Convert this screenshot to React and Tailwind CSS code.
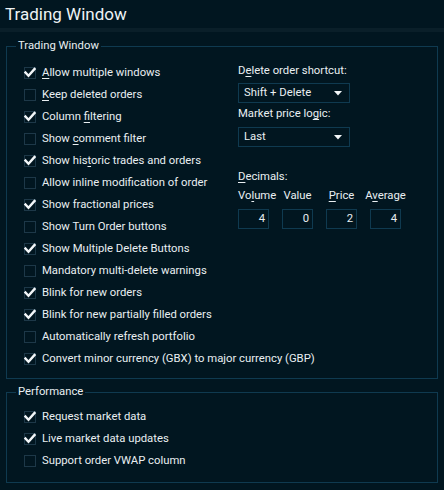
import React from 'react';

const options = [
  { label: 'Allow multiple windows', key: 'A', checked: true },
  { label: 'Keep deleted orders', key: 'K', checked: false },
  { label: 'Column filtering', key: 'f', checked: true },
  { label: 'Show comment filter', key: 'c', checked: false },
  { label: 'Show historic trades and orders', key: 't', checked: true },
  { label: 'Allow inline modification of order', checked: false },
  { label: 'Show fractional prices', checked: true },
  { label: 'Show Turn Order buttons', checked: false },
  { label: 'Show Multiple Delete Buttons', checked: true },
  { label: 'Mandatory multi-delete warnings', checked: false },
  { label: 'Blink for new orders', checked: true },
  { label: 'Blink for new partially filled orders', checked: true },
  { label: 'Automatically refresh portfolio', checked: false },
  { label: 'Convert minor currency (GBX) to major currency (GBP)', checked: true },
];

const perf = [
  { label: 'Request market data', checked: true },
  { label: 'Live market data updates', checked: true },
  { label: 'Support order VWAP column', checked: false },
];

// underline the first occurrence of the mnemonic letter
const Mnemonic = ({ text, k }) => {
  if (!k) return text;
  const i = text.indexOf(k);
  if (i < 0) return text;
  return (
    <>
      {text.slice(0, i)}
      <span className="underline underline-offset-2">{text[i]}</span>
      {text.slice(i + 1)}
    </>
  );
};

const Check = ({ label, k, checked }) => (
  <div className="flex items-center gap-1.5 h-[22px] whitespace-nowrap">
    <span className="w-3 h-3 border border-[#1d3848] flex items-center justify-center shrink-0">
      {checked && (
        <svg width="12" height="12" viewBox="0 0 12 12" className="overflow-visible">
          <polyline points="1.5,5.5 4.5,8.8 10.5,2" fill="none" stroke="#f2f6f8" strokeWidth="2.4" strokeLinecap="square" />
        </svg>
      )}
    </span>
    <span><Mnemonic text={label} k={k} /></span>
  </div>
);

const Select = ({ value }) => (
  <div className="w-[112px] h-5 border border-[#0f3a50] flex items-center justify-between pl-[5px] pr-[7px]">
    <span>{value}</span>
    <svg width="8" height="5" viewBox="0 0 8 5">
      <polygon points="0,0 8,0 4,4.5" fill="#f2f6f8" />
    </svg>
  </div>
);

const App = () => {
  const decimals = [
    { label: 'Volume', k: 'l', value: '4', align: 'justify-self-start' },
    { label: 'Value', value: '0', align: 'justify-self-center' },
    { label: 'Price', k: 'P', value: '2', align: 'justify-self-center' },
    { label: 'Average', k: 'v', value: '4', align: 'justify-self-center' },
  ];

  return (
    <div
      className="w-[444px] h-[490px] bg-[#011620] text-[#e9eff2] text-[11.3px] leading-[14px] overflow-hidden"
      style={{ fontFamily: 'Roboto, "Noto Sans", sans-serif' }}
    >
      {/* Header */}
      <div className="h-7 pl-[5px] text-[17px] leading-7 text-[#eef3f5]">Trading Window</div>
      <div className="h-1 bg-[#0a1f29]" />

      <div className="px-1.5 pt-[7px]">
        {/* Trading Window group */}
        <fieldset className="border border-[#0f3a50] pl-[9px] pr-2 pt-[9px] pb-2">
          <legend className="px-[2px]">Trading Window</legend>
          <div className="flex pl-2">
            <div className="w-[214px] shrink-0">
              {options.map((o) => (
                <Check key={o.label} label={o.label} k={o.key} checked={o.checked} />
              ))}
            </div>
            <div className="pt-[2px]">
              <div><Mnemonic text="Delete order shortcut:" k="e" /></div>
              <div className="mt-[5px]"><Select value="Shift + Delete" /></div>
              <div className="mt-1"><Mnemonic text="Market price logic:" k="g" /></div>
              <div className="mt-1.5"><Select value="Last" /></div>
              <div className="mt-[23px]"><Mnemonic text="Decimals:" k="D" /></div>
              <div className="mt-[5px] grid grid-cols-[31px_31px_31px_31px] gap-x-[13px] gap-y-1.5">
                {decimals.map((d) => (
                  <span key={d.label} className={`${d.align} whitespace-nowrap`}>
                    <Mnemonic text={d.label} k={d.k} />
                  </span>
                ))}
                {decimals.map((d) => (
                  <div key={d.label + 'v'} className="h-5 border border-[#0f3a50] flex items-center justify-end pr-[3px]">
                    {d.value}
                  </div>
                ))}
              </div>
            </div>
          </div>
        </fieldset>

        {/* Performance group */}
        <fieldset className="mt-1.5 border border-[#0f3a50] pl-[9px] pr-2 pt-[7px] pb-2.5">
          <legend className="px-[2px]">Performance</legend>
          <div className="pl-2">
            {perf.map((o) => (
              <Check key={o.label} label={o.label} checked={o.checked} />
            ))}
          </div>
        </fieldset>
      </div>
    </div>
  );
};

export default App;
